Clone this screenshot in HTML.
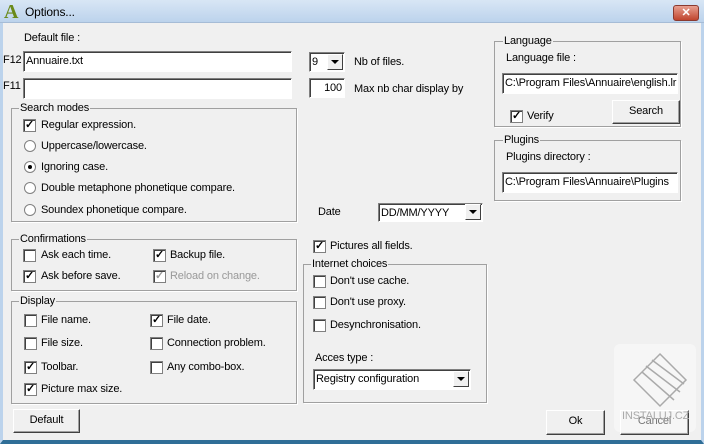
<!DOCTYPE html>
<html><head><meta charset="utf-8"><style>
*{box-sizing:border-box;margin:0;padding:0}
body{width:704px;height:444px;overflow:hidden;background:#f0f0f0;font:11px "Liberation Sans",sans-serif;letter-spacing:-0.15px;color:#000;position:relative}
.a{position:absolute;white-space:nowrap}
.title{left:0;top:0;width:704px;height:23px;background:linear-gradient(#d8e6f5,#bcd3ec);border-bottom:1px solid #a6bcd6}
.frame{left:0;top:23px;width:704px;height:421px;border:3px solid #bcd3ec;border-top:none;border-bottom:4px solid #2f6e97}
.inp{background:#fff;border-top:1px solid #808080;border-left:1px solid #808080;border-bottom:1px solid #fff;border-right:1px solid #fff;box-shadow:inset 1px 1px 0 #404040;padding:2px 2px;font-size:11px;line-height:14px;overflow:hidden}
.grp{border:1px solid #a0a0a0;box-shadow:1px 1px 0 #fff}
.lg{background:#f0f0f0;padding:0 1px;font-size:11px;line-height:12px}
.cb{width:13px;height:13px;background:#fff;border:1px solid #808080;box-shadow:inset 1px 1px 0 #404040;font-size:11px;line-height:11px;text-align:center;font-weight:bold}
.rb{width:12px;height:12px;border-radius:50%;background:#fff;border:1px solid #808080}
.btn{background:#f0f0f0;border:1px solid;border-color:#fff #404040 #404040 #fff;box-shadow:inset -1px -1px 0 #a0a0a0;text-align:center;line-height:21px}
.dd{width:16px;height:16px;background:#f0f0f0;border:1px solid;border-color:#fff #404040 #404040 #fff}
.dd:after{content:"";position:absolute;left:3px;top:5px;border-left:4px solid transparent;border-right:4px solid transparent;border-top:4px solid #000}
</style></head><body>
<div class="a title"></div>
<div class="a frame"></div>
<div class="a" style="left:4px;top:1px;font:bold 20px 'Liberation Serif',serif;color:#6a8a1a">A</div>
<div class="a" style="left:25px;top:5px;font-size:12px">Options...</div>
<div class="a" style="left:673px;top:5px;width:26px;height:16px;background:linear-gradient(#e8a090,#c0452e);border:1px solid #8a3a30;border-radius:3px;color:#fff;text-align:center;font:bold 11px/14px sans-serif">✕</div>

<div class="a" style="left:24px;top:32px">Default file :</div>
<div class="a" style="left:3px;top:54px">F12</div>
<div class="a inp" style="left:23px;top:51px;width:269px;height:21px">Annuaire.txt</div>
<div class="a" style="left:3px;top:80px">F11</div>
<div class="a inp" style="left:23px;top:78px;width:269px;height:21px"></div>
<div class="a inp" style="left:309px;top:52px;width:36px;height:20px">9</div>
<div class="a dd" style="left:327px;top:54px"></div>
<div class="a" style="left:354px;top:56px">Nb of files.</div>
<div class="a inp" style="left:309px;top:78px;width:36px;height:20px;text-align:right">100</div>
<div class="a" style="left:354px;top:83px">Max nb char display by</div>

<div class="a grp" style="left:11px;top:108px;width:286px;height:114px"></div>
<div class="a lg" style="left:19px;top:102px">Search modes</div>
<div class="a cb" style="left:23px;top:119px">✓</div><div class="a" style="left:41px;top:119px">Regular expression.</div>
<div class="a rb" style="left:24px;top:140px"></div><div class="a" style="left:41px;top:140px">Uppercase/lowercase.</div>
<div class="a rb" style="left:24px;top:161px"><div style="width:4px;height:4px;background:#000;border-radius:50%;margin:3px"></div></div><div class="a" style="left:41px;top:161px">Ignoring case.</div>
<div class="a rb" style="left:24px;top:182px"></div><div class="a" style="left:41px;top:182px">Double metaphone phonetique compare.</div>
<div class="a rb" style="left:24px;top:204px"></div><div class="a" style="left:41px;top:204px">Soundex phonetique compare.</div>

<div class="a" style="left:318px;top:206px">Date</div>
<div class="a inp" style="left:378px;top:203px;width:105px;height:19px">DD/MM/YYYY</div>
<div class="a dd" style="left:465px;top:204px"></div>

<div class="a grp" style="left:494px;top:41px;width:187px;height:86px"></div>
<div class="a lg" style="left:503px;top:35px">Language</div>
<div class="a" style="left:506px;top:52px">Language file :</div>
<div class="a inp" style="left:502px;top:73px;width:176px;height:21px">C:\Program Files\Annuaire\english.lr</div>
<div class="a cb" style="left:510px;top:110px">✓</div><div class="a" style="left:527px;top:110px">Verify</div>
<div class="a btn" style="left:612px;top:100px;width:68px;height:24px">Search</div>

<div class="a grp" style="left:494px;top:140px;width:187px;height:61px"></div>
<div class="a lg" style="left:503px;top:134px">Plugins</div>
<div class="a" style="left:506px;top:151px">Plugins directory :</div>
<div class="a inp" style="left:502px;top:172px;width:176px;height:21px">C:\Program Files\Annuaire\Plugins</div>

<div class="a grp" style="left:11px;top:239px;width:286px;height:52px"></div>
<div class="a lg" style="left:19px;top:233px">Confirmations</div>
<div class="a cb" style="left:23px;top:249px"></div><div class="a" style="left:41px;top:249px">Ask each time.</div>
<div class="a cb" style="left:23px;top:270px">✓</div><div class="a" style="left:41px;top:270px">Ask before save.</div>
<div class="a cb" style="left:153px;top:249px">✓</div><div class="a" style="left:170px;top:249px">Backup file.</div>
<div class="a cb" style="left:153px;top:270px;color:#999">✓</div><div class="a" style="left:170px;top:270px;color:#999">Reload on change.</div>

<div class="a grp" style="left:11px;top:301px;width:286px;height:103px"></div>
<div class="a lg" style="left:19px;top:295px">Display</div>
<div class="a cb" style="left:24px;top:314px"></div><div class="a" style="left:41px;top:314px">File name.</div>
<div class="a cb" style="left:24px;top:337px"></div><div class="a" style="left:41px;top:337px">File size.</div>
<div class="a cb" style="left:24px;top:361px">✓</div><div class="a" style="left:41px;top:361px">Toolbar.</div>
<div class="a cb" style="left:24px;top:383px">✓</div><div class="a" style="left:41px;top:383px">Picture max size.</div>
<div class="a cb" style="left:150px;top:314px">✓</div><div class="a" style="left:167px;top:314px">File date.</div>
<div class="a cb" style="left:150px;top:337px"></div><div class="a" style="left:167px;top:337px">Connection problem.</div>
<div class="a cb" style="left:150px;top:361px"></div><div class="a" style="left:167px;top:361px">Any combo-box.</div>

<div class="a cb" style="left:313px;top:240px">✓</div><div class="a" style="left:330px;top:240px">Pictures all fields.</div>
<div class="a grp" style="left:303px;top:264px;width:184px;height:139px"></div>
<div class="a lg" style="left:311px;top:258px">Internet choices</div>
<div class="a cb" style="left:313px;top:275px"></div><div class="a" style="left:330px;top:275px">Don't use cache.</div>
<div class="a cb" style="left:313px;top:296px"></div><div class="a" style="left:330px;top:296px">Don't use proxy.</div>
<div class="a cb" style="left:313px;top:319px"></div><div class="a" style="left:330px;top:319px">Desynchronisation.</div>
<div class="a" style="left:315px;top:352px">Acces type :</div>
<div class="a inp" style="left:313px;top:369px;width:158px;height:21px">Registry configuration</div>
<div class="a dd" style="left:453px;top:371px"></div>

<div class="a btn" style="left:13px;top:409px;width:67px;height:24px">Default</div>
<div class="a btn" style="left:546px;top:410px;width:59px;height:25px">Ok</div>
<div class="a" style="left:614px;top:344px;width:82px;height:88px;background:#f6f6f6;border-radius:6px"></div>
<svg class="a" style="left:630px;top:350px" width="60" height="64" viewBox="0 0 60 64"><g fill="none" stroke="#aaa" stroke-width="1.5"><path d="M30 4 L56 30 L30 56 L4 30 Z"/><path d="M12 22 L44 50 M16 16 L50 42 M22 10 L54 34"/></g></svg>
<div class="a btn" style="left:620px;top:410px;width:69px;height:25px;background:transparent;color:#777">Cancel</div>
<div class="a" style="left:622px;top:410px;color:#aaa;font-size:11px">INSTALUJ.CZ</div>
</body></html>
